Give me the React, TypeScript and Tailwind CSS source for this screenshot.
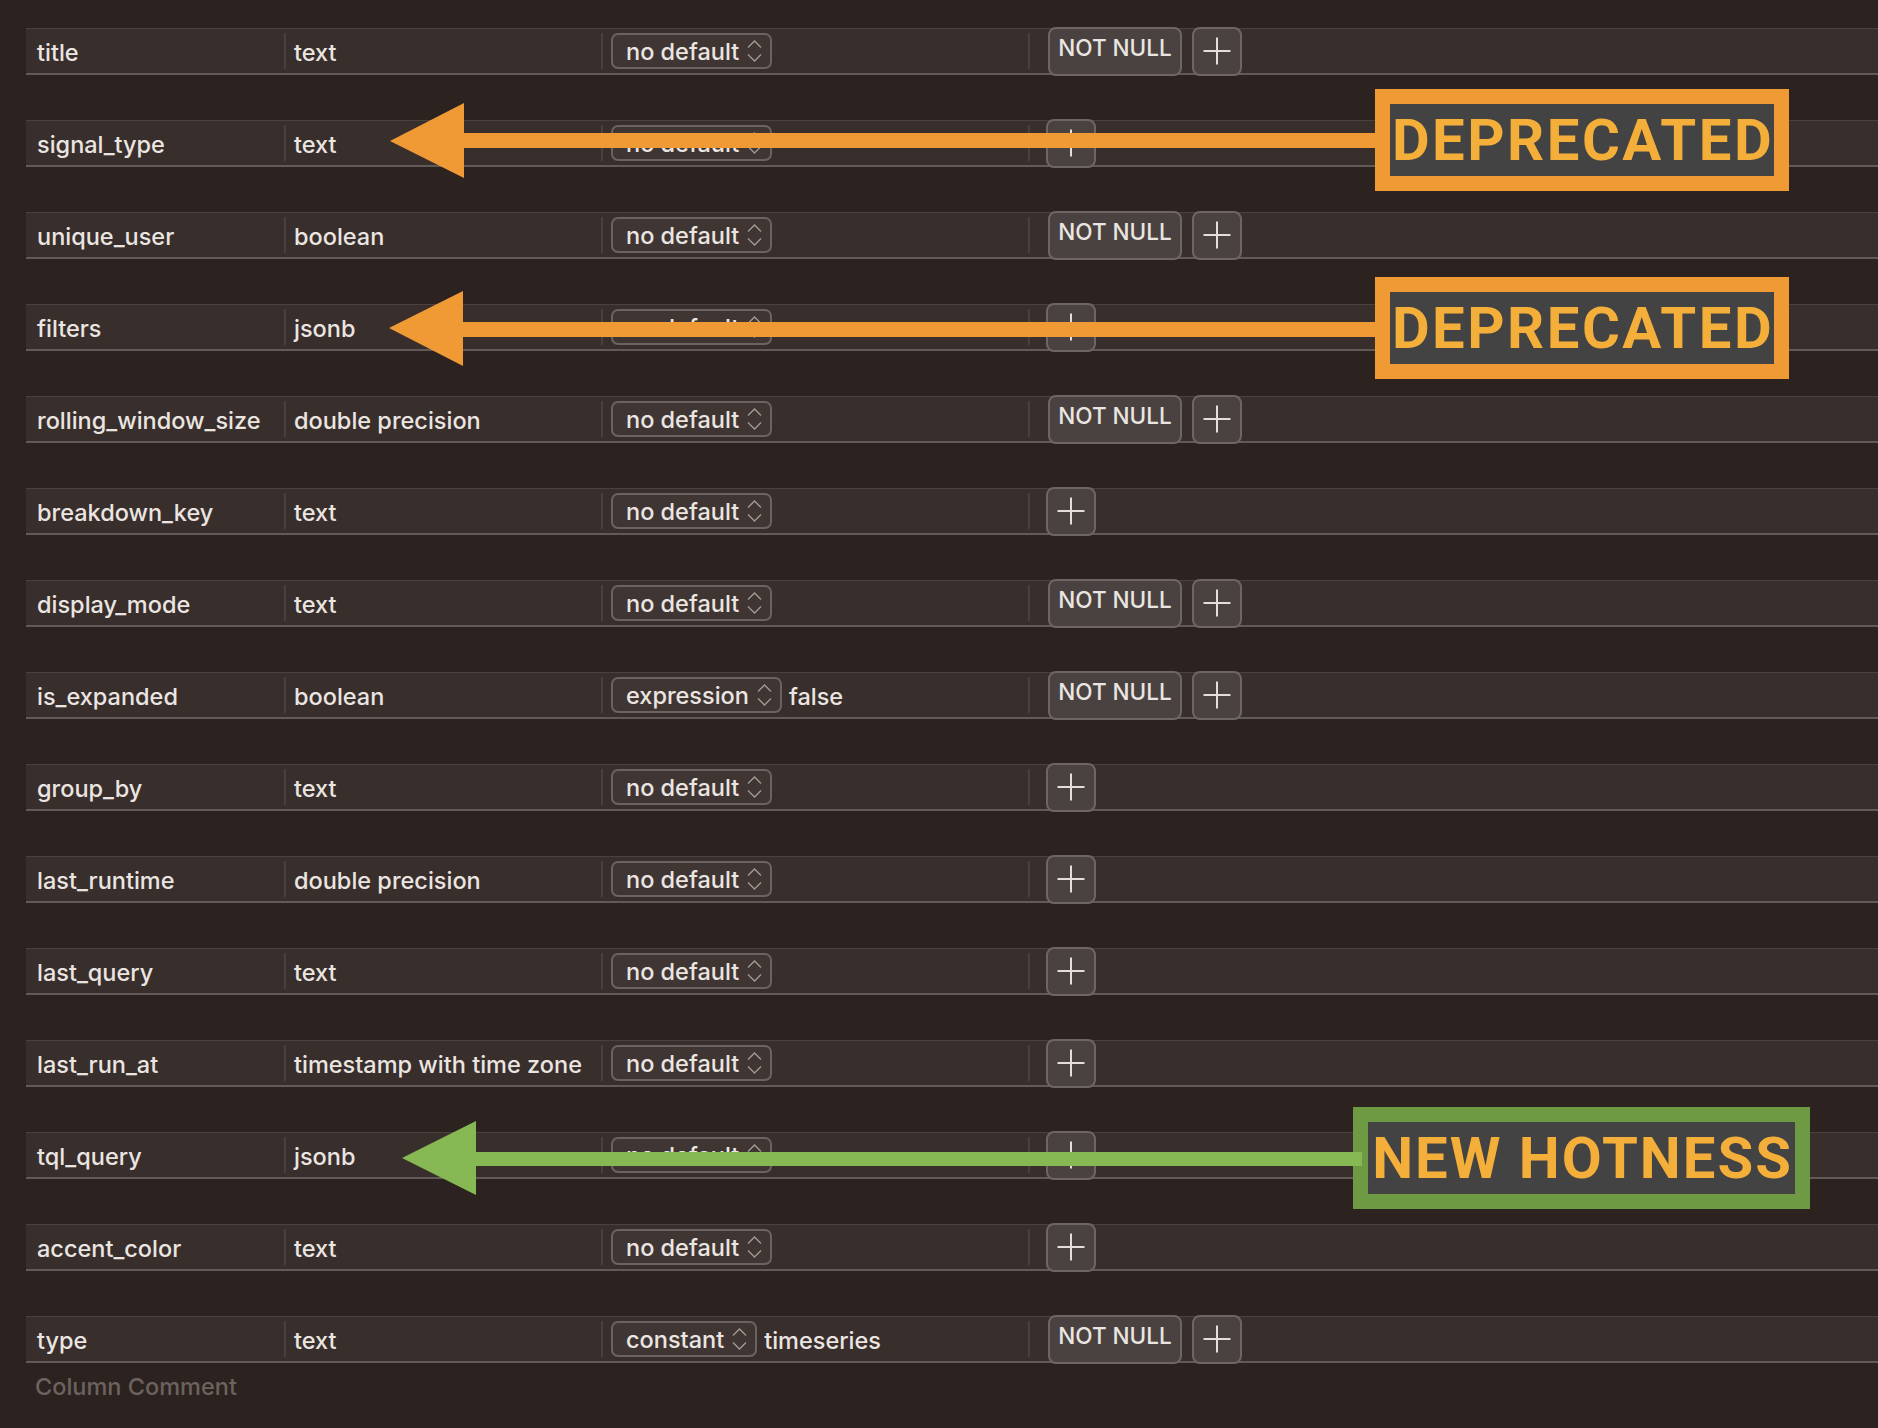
import React from "react";

type Row = {
  name: string;
  type: string;
  def: string;
  value?: string;
  notNull: boolean;
};

const rows: Row[] = [
  { name: "title", type: "text", def: "no default", notNull: true },
  { name: "signal_type", type: "text", def: "no default", notNull: false },
  { name: "unique_user", type: "boolean", def: "no default", notNull: true },
  { name: "filters", type: "jsonb", def: "no default", notNull: false },
  { name: "rolling_window_size", type: "double precision", def: "no default", notNull: true },
  { name: "breakdown_key", type: "text", def: "no default", notNull: false },
  { name: "display_mode", type: "text", def: "no default", notNull: true },
  { name: "is_expanded", type: "boolean", def: "expression", value: "false", notNull: true },
  { name: "group_by", type: "text", def: "no default", notNull: false },
  { name: "last_runtime", type: "double precision", def: "no default", notNull: false },
  { name: "last_query", type: "text", def: "no default", notNull: false },
  { name: "last_run_at", type: "timestamp with time zone", def: "no default", notNull: false },
  { name: "tql_query", type: "jsonb", def: "no default", notNull: false },
  { name: "accent_color", type: "text", def: "no default", notNull: false },
  { name: "type", type: "text", def: "constant", value: "timeseries", notNull: true },
];

function Chevrons() {
  return (
    <svg width="15" height="22" viewBox="0 0 15 22" fill="none" className="shrink-0">
      <polyline points="1,7.5 7.5,1 14,7.5" stroke="#a39a96" strokeWidth="1.3" />
      <polyline points="1,14.5 7.5,21 14,14.5" stroke="#a39a96" strokeWidth="1.3" />
    </svg>
  );
}

function PlusIcon() {
  return (
    <svg width="28" height="28" viewBox="0 0 28 28" fill="none">
      <line x1="0.5" y1="14" x2="27.5" y2="14" stroke="#e4dedb" strokeWidth="2" />
      <line x1="14" y1="0.5" x2="14" y2="27.5" stroke="#e4dedb" strokeWidth="2" />
    </svg>
  );
}

function Divider() {
  return <div className="w-[2px] h-[36px] bg-[#4a413e] shrink-0" />;
}

function TableRow({ row }: { row: Row }) {
  return (
    <div className="h-[47px] flex items-center bg-[#382e2b] border-t border-t-[#4b423f] border-b-2 border-b-[#625a57] text-[#ebe5e2] text-[23.5px] font-medium leading-none">
      <div className="w-[258px] pl-[11px] pt-[3px] shrink-0">{row.name}</div>
      <Divider />
      <div className="w-[315px] pl-[8px] pt-[3px] shrink-0">{row.type}</div>
      <Divider />
      <div className="w-[425px] pl-[8px] shrink-0 flex items-center gap-[7px]">
        <div className="h-[36px] flex items-center gap-[8px] pl-[13px] pr-[8px] rounded-[7px] border-2 border-[#6b6360] bg-[#3f3633]">
          <span className="pt-[1px]">{row.def}</span>
          <Chevrons />
        </div>
        {row.value && <span className="pt-[3px]">{row.value}</span>}
      </div>
      <Divider />
      {row.notNull ? (
        <div className="flex items-center gap-[10px] ml-[18px]">
          <div className="w-[134px] h-[49px] rounded-[8px] border-2 border-[#6e6663] bg-[#4a4240] flex justify-center pt-[8px] text-[22.5px]">
            NOT NULL
          </div>
          <div className="w-[50px] h-[49px] rounded-[8px] border-2 border-[#6e6663] bg-[#4a4240] flex items-center justify-center">
            <PlusIcon />
          </div>
        </div>
      ) : (
        <div className="ml-[16px]">
          <div className="w-[50px] h-[49px] rounded-[8px] border-2 border-[#6e6663] bg-[#4a4240] flex items-center justify-center">
            <PlusIcon />
          </div>
        </div>
      )}
    </div>
  );
}

export default function App() {
  return (
    <div
      className="relative w-[1878px] h-[1428px] overflow-hidden bg-[#2c2320]"
      style={{ fontFamily: "Inter, 'Noto Sans', sans-serif" }}
    >
      <div className="pt-[28px] pl-[26px] flex flex-col gap-[45px]">
        {rows.map((r) => (
          <TableRow key={r.name} row={r} />
        ))}
      </div>
      <div className="pl-[35px] pt-[12px] text-[23.5px] font-medium text-[#6c625f] leading-none">Column Comment</div>

      {/* DEPRECATED 1 */}
      <div className="absolute left-[1375px] top-[89px] w-[414px] h-[102px] border-[15px] border-[#ef9a35] bg-[#434343] flex items-center justify-center">
        <span
          className="text-[#f4ae3a] font-bold text-[58px] leading-none tracking-[2.5px] pl-[2px] whitespace-nowrap"
          style={{ fontFamily: "Roboto, 'Liberation Sans', sans-serif" }}
        >
          DEPRECATED
        </span>
      </div>
      <svg className="absolute left-0 top-0" width="1878" height="1428" fill="none" style={{ pointerEvents: "none" }}>
        <polygon points="390,141 464,103 464,178" fill="#f09a35" />
        <rect x="463" y="133" width="913" height="15" fill="#f09a35" />
        <polygon points="389,328 463,291 463,366" fill="#f09a35" />
        <rect x="462" y="322" width="914" height="15" fill="#f09a35" />
      </svg>

      {/* DEPRECATED 2 */}
      <div className="absolute left-[1375px] top-[277px] w-[414px] h-[102px] border-[15px] border-[#ef9a35] bg-[#434343] flex items-center justify-center">
        <span
          className="text-[#f4ae3a] font-bold text-[58px] leading-none tracking-[2.5px] pl-[2px] whitespace-nowrap"
          style={{ fontFamily: "Roboto, 'Liberation Sans', sans-serif" }}
        >
          DEPRECATED
        </span>
      </div>

      {/* NEW HOTNESS */}
      <div className="absolute left-[1353px] top-[1107px] w-[457px] h-[102px] border-[15px] border-[#6e9a43] bg-[#434343] flex items-center justify-center">
        <span
          className="text-[#f4ae3a] font-bold text-[58px] leading-none tracking-[2px] pl-[2px] whitespace-nowrap"
          style={{ fontFamily: "Roboto, 'Liberation Sans', sans-serif" }}
        >
          NEW HOTNESS
        </span>
      </div>
      <svg className="absolute left-0 top-0" width="1878" height="1428" fill="none" style={{ pointerEvents: "none" }}>
        <polygon points="402,1158 476,1121 476,1195" fill="#86b853" />
        <rect x="475" y="1152" width="887" height="14" fill="#86b853" />
      </svg>
    </div>
  );
}
